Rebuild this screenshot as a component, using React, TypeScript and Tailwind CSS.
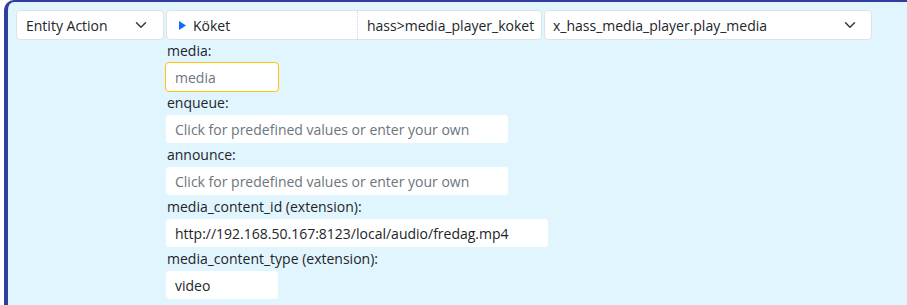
const Chevron = () => (
  <svg width="12" height="12" viewBox="0 0 16 16" fill="none" stroke="#343a40" strokeWidth="2" strokeLinecap="round" strokeLinejoin="round">
    <path d="M2 5l6 6 6-6" />
  </svg>
)

const fields = [
  { label: "media:", value: "", placeholder: "media", w: "w-[114px]", active: true },
  { label: "enqueue:", value: "", placeholder: "Click for predefined values or enter your own", w: "w-[344px]" },
  { label: "announce:", value: "", placeholder: "Click for predefined values or enter your own", w: "w-[344px]" },
  { label: "media_content_id (extension):", value: "http://192.168.50.167:8123/local/audio/fredag.mp4", placeholder: "", w: "w-[384px]" },
  { label: "media_content_type (extension):", value: "video", placeholder: "", w: "w-[114px]" },
]

const App = () => {
  return (
    <div className="w-[907px] h-[305px] bg-white pl-[4px] overflow-hidden" style={{ fontFamily: '"Open Sans", sans-serif' }}>
      <div className="h-[320px] bg-[#e1f5fe] border-l-4 border-t-2 border-[#303f9f] rounded-tl-[10px] pl-[8px] pt-[8px] text-[14px] text-[#212529]">
        <div className="flex h-[30px] gap-[2px]">
          <div className="w-[148px] bg-white border border-[#dee2e6] rounded-[4px] flex items-center justify-between pl-[9px] pr-[16px]">
            <span>Entity Action</span>
            <Chevron />
          </div>
          <div className="w-[376px] bg-white border border-[#dee2e6] rounded-[4px] flex">
            <div className="w-[191px] flex items-center pl-[12px] gap-[7px] border-r border-dotted border-[#ced4da]">
              <svg width="7" height="9" viewBox="0 0 7 9"><path d="M0 0L7 4.5L0 9Z" fill="#0d6efd" /></svg>
              <span>Köket</span>
            </div>
            <div className="flex items-center pl-[9px]">hass&gt;media_player_koket</div>
          </div>
          <div className="w-[328px] bg-white border border-[#dee2e6] rounded-[4px] flex items-center justify-between pl-[8px] pr-[15px]">
            <span>x_hass_media_player.play_media</span>
            <Chevron />
          </div>
        </div>
        <div className="ml-[149px] flex flex-col">
          {fields.map((f) => (
            <div key={f.label} className="flex flex-col h-[52px]">
              <div className="h-[22px] leading-[22px] pl-[2px]">{f.label}</div>
              <div
                className={`${f.w} h-[30px] bg-white rounded-[4px] flex items-center pl-[9px] border ${f.active ? "border-[#ffc107]" : "border-[#e1f5fe]"}`}
              >
                {f.value ? <span>{f.value}</span> : <span className="text-[#6c757d]">{f.placeholder}</span>}
              </div>
            </div>
          ))}
        </div>
      </div>
    </div>
  )
}

export default App
